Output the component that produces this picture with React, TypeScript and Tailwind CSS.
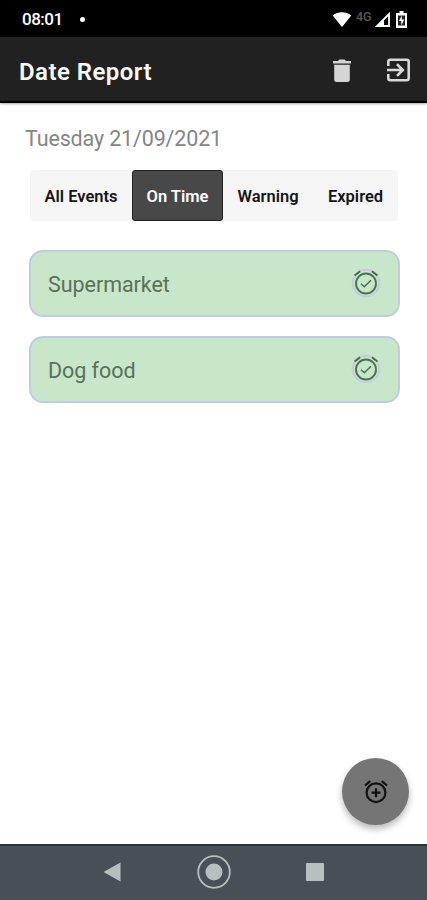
import React from 'react';

const TABS = [
  { label: 'All Events', width: 'w-[102px]' },
  { label: 'On Time', width: 'w-[91px]' },
  { label: 'Warning', width: 'w-[90px]' },
  { label: 'Expired', width: 'w-[85px]' },
];

const EVENTS = ['Supermarket', 'Dog food'];

function StatusBar() {
  return (
    <div className="flex h-[37px] items-center bg-black pl-[22px] pt-0.5 text-white">
      <span className="w-[41px] whitespace-nowrap pt-px text-[17px] font-medium tracking-[-0.5px]">08:01</span>
      <span className="ml-[17px] size-[5px] rounded-full bg-white" />
      <svg className="ml-auto h-[17px] w-5" viewBox="0 0 20 17" fill="#fff">
        <path d="M0.7 4.5C6 .2 14 .2 19.3 4.5L10 16z" />
      </svg>
      <span className="ml-1 w-[17px] -translate-y-[3px] whitespace-nowrap text-[12.5px] font-medium leading-[17px] text-[#555]">4G</span>
      <svg className="ml-[2px] h-[16px] w-4" viewBox="0 0 16 16" fill="none">
        <path d="M14 2v12H2z" stroke="#fff" strokeWidth="1.8" />
        <path d="M9 7v7H2z" fill="#fff" />
      </svg>
      <svg className="ml-[5px] mr-5 h-[17px] w-[11px]" viewBox="0 0 11 17">
        <path d="M3.5 0h4v2H11v15H0V2h3.5z" fill="#fff" />
        <path d="M2 4.5h7v10H2z" fill="#222" />
        <path d="M5.8 4.5 3 10h2.2v4.5L8.3 8.4H5.9z" fill="#fff" />
      </svg>
    </div>
  );
}

function Header() {
  return (
    <div className="flex h-[66px] items-center border-b-2 border-black bg-[#212121] pl-[19px] shadow-[0_1px_2px_rgba(0,0,0,0.35)]">
      <h1 className="whitespace-nowrap pt-[5px] text-[24px] font-semibold tracking-[0.45px] text-[#fafafa]">Date Report</h1>
      <svg className="ml-auto mt-[3px] h-6 w-[20px]" viewBox="0 0 20 24" fill="#d5d5d5">
        <path d="M1 2h5l1.4-1.5h5.2L14 2h5v2.6H1zM2.2 5.8h15.6v14.8a2.5 2.5 0 0 1-2.5 2.5H4.7a2.5 2.5 0 0 1-2.5-2.5z" />
      </svg>
      <svg className="ml-[34px] mr-4 mt-0.5 h-6 w-[25px]" viewBox="0 0 25 24" fill="none" stroke="#d8d8d8" strokeWidth="2.6">
        <path d="M2.3 8V3.8a2 2 0 0 1 2-2h16.4a2 2 0 0 1 2 2v16.4a2 2 0 0 1-2 2H4.3a2 2 0 0 1-2-2V16" />
        <path d="M1 12h15M11 6.2l5.8 5.8-5.8 5.8" />
      </svg>
    </div>
  );
}

function CheckAlarm() {
  return (
    <svg className="-mt-0.5 size-[30px]" viewBox="0 0 30 30" fill="none">
      <circle cx="15" cy="15" r="13.3" stroke="#c0cfdf" strokeWidth="2" />
      <circle cx="15" cy="15.5" r="10" stroke="#4d7050" strokeWidth="1.9" />
      <path d="M10 15.8l3.3 3 6.7-6.5" stroke="#4d7050" strokeWidth="1.5" />
      <path d="M3.6 7.6l5.5-4.4M20.9 3.2l5.5 4.4" stroke="#4a664d" strokeWidth="1.9" />
    </svg>
  );
}

function NavBar() {
  return (
    <div className="flex h-14 items-center border-t-2 border-[#26343c] bg-[#465056] pb-0.5 pl-[103px]">
      <svg className="h-5 w-[18px]" viewBox="0 0 18 20" fill="#b7c0c1">
        <path d="M17.5 .5v19L.5 10z" />
      </svg>
      <svg className="ml-[76px] size-[34px]" viewBox="0 0 34 34">
        <circle cx="17" cy="17" r="15.8" fill="none" stroke="#b7c0c1" strokeWidth="1.8" />
        <circle cx="17" cy="17" r="8.5" fill="#b7c0c1" />
      </svg>
      <span className="ml-[75px] size-[18px] rounded-[1px] bg-[#b7c0c1]" />
    </div>
  );
}

export default function App() {
  return (
    <div className="relative flex h-[900px] w-[427px] flex-col overflow-hidden bg-white font-['Roboto',sans-serif]">
      <StatusBar />
      <Header />

      <div className="flex-1">
        <p className="ml-[25px] mt-[21px] whitespace-nowrap text-[21.5px] leading-[30px] tracking-[-0.15px] text-[#858585]">
          Tuesday 21/09/2021
        </p>

        <div className="ml-[30px] mt-4 flex h-[51px] w-[368px] rounded bg-[#f5f5f5]">
          {TABS.map(({ label, width }) => (
            <button
              key={label}
              className={`${width} whitespace-nowrap rounded-[3px] pt-1 text-[16.5px] font-semibold ${
                label === 'On Time' ? 'border border-[#202020] bg-[#484848] text-white' : 'text-[#151515]'
              }`}
            >
              {label}
            </button>
          ))}
        </div>

        <div className="ml-[29px] mt-[29px] flex w-[371px] flex-col gap-[19px]">
          {EVENTS.map((name) => (
            <div
              key={name}
              className="flex h-[67px] items-center justify-between rounded-[14px] border-2 border-[#c0cde0] bg-[#c8e6c9] pl-[17px] pr-[17px]"
            >
              <span className="pt-[3px] text-[21.5px] tracking-[-0.05px] text-[#587159]">{name}</span>
              <CheckAlarm />
            </div>
          ))}
        </div>
      </div>

      {/* Add button floats over the list */}
      <button className="absolute bottom-[75px] right-[18px] flex size-[67px] items-center justify-center rounded-full bg-[#757575] shadow-[0_4px_7px_rgba(0,0,0,0.28)]">
        <svg className="size-[26px]" viewBox="0 0 26 26" fill="none" stroke="#111" strokeWidth="2.2">
          <circle cx="13" cy="13.7" r="9.4" />
          <path d="M13 9.2v9M8.5 13.7h9M2 6.5l5.2-4.4M18.8 2.1L24 6.5" />
        </svg>
      </button>

      <NavBar />
    </div>
  );
}
